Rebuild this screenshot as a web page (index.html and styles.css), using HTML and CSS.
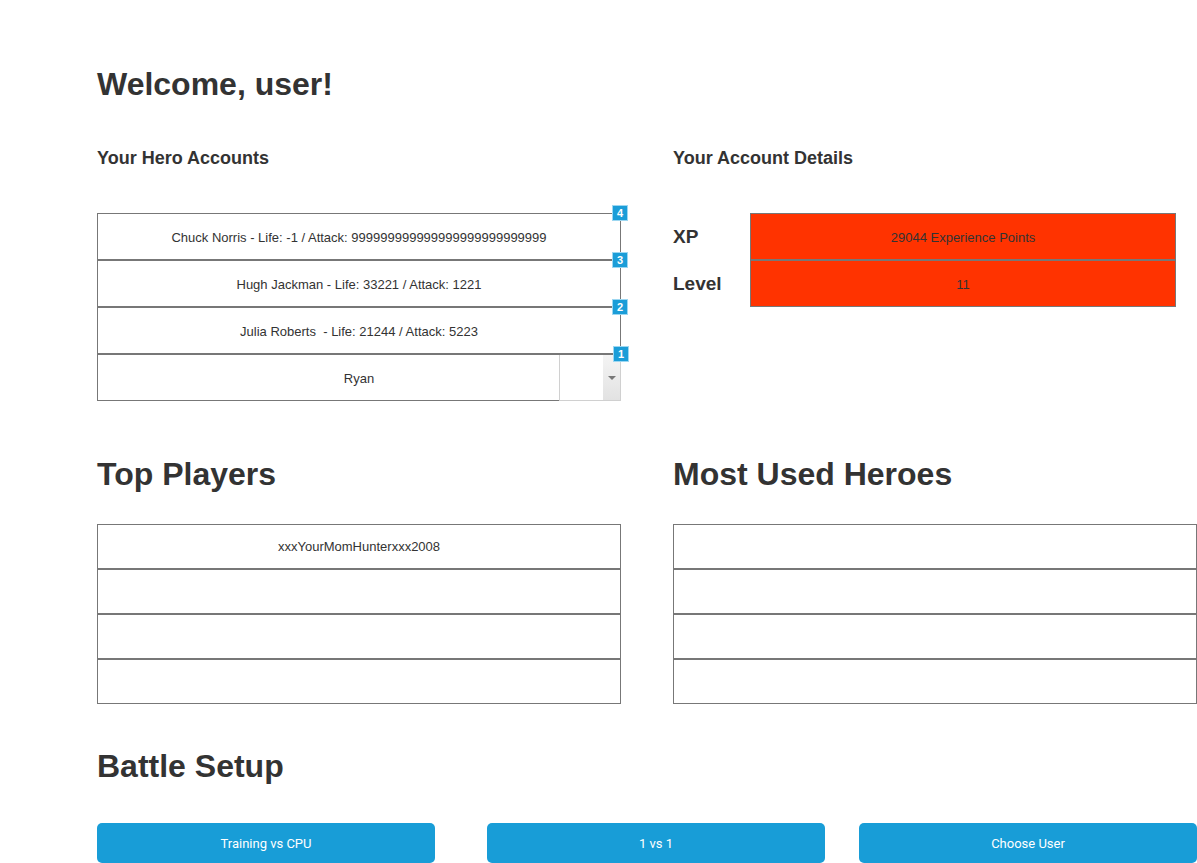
FILE: index.html
```html
<!DOCTYPE html>
<html>
<head>
<meta charset="utf-8">
<link rel="stylesheet" href="styles.css">
</head>
<body>
<div class="page">
  <h1 class="title">Welcome, user!</h1>
  <div class="cols top-cols">
    <section>
      <h3 class="sub">Your Hero Accounts</h3>
      <div class="hero-list">
        <div class="row hero-row">Chuck Norris - Life: -1 / Attack: 999999999999999999999999999<span class="badge">4</span></div>
        <div class="row hero-row">Hugh Jackman - Life: 33221 / Attack: 1221<span class="badge">3</span></div>
        <div class="row hero-row">Julia Roberts&nbsp; - Life: 21244 / Attack: 5223<span class="badge">2</span></div>
        <div class="row select-row">
          <div class="select-text">Ryan</div>
          <div class="select-box"><div class="select-arrow"><span class="tri"></span></div></div>
          <span class="badge">1</span>
        </div>
      </div>
    </section>
    <section>
      <h3 class="sub">Your Account Details</h3>
      <div class="details">
        <div class="detail-row"><div class="label">XP</div><div class="value">29044 Experience Points</div></div>
        <div class="detail-row"><div class="label">Level</div><div class="value">11</div></div>
      </div>
    </section>
  </div>
  <div class="cols mid-cols">
    <section>
      <h2 class="big">Top Players</h2>
      <div class="list">
        <div class="row list-row">xxxYourMomHunterxxx2008</div>
        <div class="row list-row"></div>
        <div class="row list-row"></div>
        <div class="row list-row"></div>
      </div>
    </section>
    <section>
      <h2 class="big">Most Used Heroes</h2>
      <div class="list">
        <div class="row list-row"></div>
        <div class="row list-row"></div>
        <div class="row list-row"></div>
        <div class="row list-row"></div>
      </div>
    </section>
  </div>
  <h2 class="big battle">Battle Setup</h2>
  <div class="buttons">
    <button class="btn">Training vs CPU</button>
    <button class="btn btn-mid">1 vs 1</button>
    <button class="btn btn-last">Choose User</button>
  </div>
</div>
</body>
</html>
```

FILE: styles.css
```css
html, body {
  margin: 0;
  padding: 0;
  overflow: hidden;
}
body {
  font-family: "Liberation Sans", Arial, sans-serif;
  color: #333;
  background: #fff;
}
.page {
  padding: 66px 0 0 97px;
}
.title {
  margin: 0;
  font-size: 32px;
  line-height: 37px;
  font-weight: bold;
}
.cols {
  display: grid;
  grid-template-columns: 524px 524px;
  column-gap: 52px;
}
.top-cols {
  margin-top: 45px;
}
.sub {
  margin: 0;
  font-size: 18px;
  line-height: 20px;
  font-weight: bold;
}
.hero-list {
  margin-top: 45px;
}
.row {
  position: relative;
  box-sizing: border-box;
  border: 1px solid #777;
  display: flex;
  align-items: center;
  justify-content: center;
  font-size: 13px;
}
.hero-row {
  height: 47px;
  padding-top: 1px;
}
.badge {
  position: absolute;
  top: -9px;
  right: -8px;
  width: 14px;
  height: 14px;
  background: #1b9dd8;
  border: 1px solid #9dd7f1;
  color: #fff;
  font-size: 11px;
  font-weight: bold;
  line-height: 14px;
  text-align: center;
}
.select-row {
  height: 47px;
  border-right: none;
  align-items: stretch;
}
.select-text {
  flex: 1;
  display: flex;
  align-items: center;
  justify-content: center;
  padding-left: 61px;
  padding-top: 1px;
}
.select-box {
  width: 62px;
  box-sizing: border-box;
  border: 1px solid #d0d0d0;
  border-top: none;
  margin-bottom: -1px;
  background: #fff;
  display: flex;
  justify-content: flex-end;
}
.select-arrow {
  width: 17px;
  background: linear-gradient(#f4f4f4, #e2e2e2);
  display: flex;
  align-items: center;
  justify-content: center;
}
.tri {
  width: 0;
  height: 0;
  border-left: 4px solid transparent;
  border-right: 4px solid transparent;
  border-top: 4px solid #777;
}
.details {
  margin-top: 45px;
}
.detail-row {
  display: flex;
  align-items: center;
}
.label {
  width: 77px;
  font-size: 19px;
  font-weight: bold;
}
.value {
  width: 426px;
  height: 47px;
  box-sizing: border-box;
  border: 1px solid #777;
  background: #ff3300;
  display: flex;
  align-items: center;
  justify-content: center;
  padding-top: 1px;
  font-size: 13px;
  color: #333;
}
.mid-cols {
  margin-top: 55px;
}
.big {
  margin: 0;
  font-size: 32px;
  line-height: 37px;
  font-weight: bold;
}
.list {
  margin-top: 31px;
}
.list-row {
  height: 45px;
}
.battle {
  margin-top: 44px;
}
.buttons {
  display: flex;
  margin-top: 38px;
}
.btn {
  width: 338px;
  height: 40px;
  border: none;
  border-radius: 5px;
  background: #189dd7;
  color: #fff;
  font-family: Roboto, "Liberation Sans", sans-serif;
  font-size: 13px;
  padding: 0;
}
.btn-mid {
  margin-left: 52px;
}
.btn-last {
  margin-left: 34px;
}
```
